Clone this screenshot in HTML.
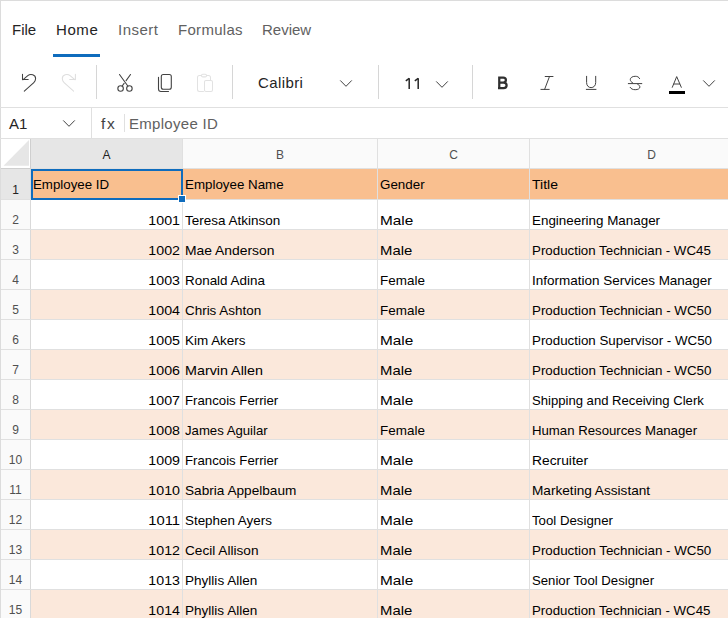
<!DOCTYPE html><html><head><meta charset="utf-8"><style>
*{margin:0;padding:0;box-sizing:border-box}
html,body{width:728px;height:618px;overflow:hidden;background:#fff}
body{position:relative;font-family:"Liberation Sans",sans-serif;}
.a{position:absolute}
.t{position:absolute;white-space:nowrap;line-height:16px;height:16px}
.tab{font-size:15px;color:#616161}
.cell{font-size:13.4px;color:#000}
.hl{position:absolute;background:#e0e0e0}
svg{position:absolute;overflow:visible}
</style></head><body>
<div class="a" style="left:0;top:0;width:728px;height:1px;background:#dcdcdc"></div>
<div class="a" style="left:0;top:0;width:1px;height:618px;background:#dcdcdc"></div>
<div class="t tab" style="left:12px;top:22px;color:#242424;letter-spacing:0px">File</div>
<div class="t tab" style="left:56px;top:22px;color:#242424;letter-spacing:0.6px">Home</div>
<div class="t tab" style="left:118px;top:22px;color:#616161;letter-spacing:0.5px">Insert</div>
<div class="t tab" style="left:178px;top:22px;color:#616161;letter-spacing:0.3px">Formulas</div>
<div class="t tab" style="left:262px;top:22px;color:#616161;letter-spacing:0px">Review</div>
<div class="a" style="left:53px;top:54px;width:47px;height:3px;background:#0f6cbd"></div>
<div class="a" style="left:96px;top:65px;width:1px;height:34px;background:#d6d6d6"></div>
<div class="a" style="left:232px;top:65px;width:1px;height:34px;background:#d6d6d6"></div>
<div class="a" style="left:378px;top:65px;width:1px;height:34px;background:#d6d6d6"></div>
<div class="a" style="left:472px;top:65px;width:1px;height:34px;background:#d6d6d6"></div>
<svg style="left:0;top:0" width="728" height="110" viewBox="0 0 728 110">
<g fill="none" stroke="#424242" stroke-width="1.05" stroke-linecap="round" stroke-linejoin="round">
 <path d="M22.5 74.3 V79.5 H28.2"/>
 <path d="M22.8 79.8 L27.8 75.6 C30.6 73.4 35.6 74.6 35.6 78.6 C35.6 80.3 34.9 81.6 33.8 82.6 L24.3 91.2"/>
</g>
<g fill="none" stroke="#dedede" stroke-width="1.05" stroke-linecap="round" stroke-linejoin="round">
 <path d="M75.4 74.3 V79.5 H69.7"/>
 <path d="M 75.1 79.8 L 70.1 75.6 C 67.3 73.4 62.3 74.6 62.3 78.6 C 62.3 80.3 63 81.6 64.1 82.6 L 73.6 91.2"/>
</g>
<g fill="none" stroke="#424242" stroke-width="1.1" stroke-linecap="round" stroke-linejoin="round">
 <path d="M119.5 74.5 L127.8 86"/>
 <path d="M130.5 74.5 L126.1 80.6"/><path d="M124.1 83.4 L122.2 86"/>
 <circle cx="120.6" cy="88.5" r="2.75"/>
 <circle cx="129.4" cy="88.5" r="2.75"/>
</g>
<g fill="none" stroke="#424242" stroke-width="1.1" stroke-linecap="round" stroke-linejoin="round">
 <rect x="161.3" y="74.5" width="10" height="14.8" rx="2"/>
 <path d="M158.5 77.3 V89 C158.5 90.4 159.6 91.5 161 91.5 H168.5"/>
</g>
<g fill="none" stroke="#e2e2e2" stroke-width="1.05" stroke-linecap="round" stroke-linejoin="round">
 <path d="M203.5 91.5 H199.5 C198.3 91.5 197.5 90.7 197.5 89.5 V77.5 C197.5 76.3 198.3 75.5 199.5 75.5 H201.5"/>
 <path d="M206.5 75.5 H208.5 C209.7 75.5 210.5 76.3 210.5 77.5 V79.5"/>
 <rect x="201.5" y="74.2" width="5" height="2.7" rx="1.2"/>
 <rect x="204.5" y="80.5" width="8" height="11" rx="1.5"/>
</g>
</svg>
<div class="t" style="left:258px;top:75px;font-size:15px;color:#242424;letter-spacing:0.4px">Calibri</div>
<svg style="left:340px;top:80px" width="12" height="7" viewBox="0 0 12 7"><path d="M0.5 0.7 L6.0 6.3 L11.5 0.7" fill="none" stroke="#424242" stroke-width="1" stroke-linecap="round" stroke-linejoin="round"/></svg>
<svg style="left:436px;top:80.5px" width="12" height="7" viewBox="0 0 12 7"><path d="M0.5 0.7 L6.0 6.3 L11.5 0.7" fill="none" stroke="#424242" stroke-width="1" stroke-linecap="round" stroke-linejoin="round"/></svg>
<svg style="left:703px;top:79.5px" width="12" height="7" viewBox="0 0 12 7"><path d="M0.5 0.7 L6.0 6.3 L11.5 0.7" fill="none" stroke="#424242" stroke-width="1" stroke-linecap="round" stroke-linejoin="round"/></svg>
<svg style="left:0;top:0" width="728" height="110" viewBox="0 0 728 110">
<g fill="none" stroke="#242424" stroke-width="1.5" stroke-linecap="butt" stroke-linejoin="round">
 <path d="M409.2 78.2 V89"/><path d="M409.2 78.4 L405.8 80.9"/>
 <path d="M418.2 78.2 V89"/><path d="M418.2 78.4 L414.8 80.9"/>
</g>
<g fill="none" stroke="#303030" stroke-width="2.25" stroke-linejoin="miter">
 <path d="M499.25 88.1 V77.55 H503.2 C505 77.55 505.9 78.6 505.9 80 C505.9 81.5 504.8 82.5 503.2 82.5 H499.25 M503.2 82.5 H503.6 C505.6 82.5 506.6 83.7 506.6 85.3 C506.6 87 505.5 88.1 503.6 88.1 H498"/>
</g>
<g fill="none" stroke="#424242" stroke-width="1" stroke-linecap="round">
 <path d="M545.2 76.5 H553"/><path d="M540.9 89.4 H549.2"/><path d="M549.5 76.5 L544.6 89.4"/>
 <path d="M586.6 76.3 V82.5 C586.6 85.8 588.6 87.6 591.1 87.6 C593.6 87.6 595.7 85.8 595.7 82.5 V76.3"/>
 <path d="M586.3 89.4 H596"/>
 <path d="M639.6 78.6 C638.9 76.9 637.3 76.3 635.2 76.3 C632.4 76.3 630.3 77.6 630.3 79.6 C630.3 81 631.2 82 632.6 82.8"/>
 <path d="M628.3 83.6 H641.8"/>
 <path d="M637.6 84.2 C639 84.9 639.9 85.8 639.9 87 C639.9 88.6 638 89.7 635.2 89.7 C632.8 89.7 631 88.9 630.2 87.4"/>
 <path d="M672.3 87.3 L676.7 76.6 L681.3 87.3"/><path d="M673.9 84 H679.7"/>
</g>
<rect x="669" y="91" width="16" height="3" fill="#000"/>
</svg>
<div class="hl" style="left:0;top:107px;width:728px;height:1px"></div>
<div class="hl" style="left:0;top:138px;width:728px;height:1px"></div>
<div class="hl" style="left:91px;top:108px;width:1px;height:30px"></div>
<div class="t" style="left:9px;top:116px;font-size:15px;color:#242424">A1</div>
<svg style="left:63px;top:120px" width="12" height="7" viewBox="0 0 12 7"><path d="M0.5 0.7 L6.0 6.3 L11.5 0.7" fill="none" stroke="#424242" stroke-width="1" stroke-linecap="round" stroke-linejoin="round"/></svg>
<div class="t" style="left:101px;top:116px;font-size:15.5px;color:#424242;letter-spacing:1.6px">fx</div>
<div class="a" style="left:124px;top:114px;width:1px;height:18px;background:#e0e0e0"></div>
<div class="t" style="left:129px;top:116px;font-size:15px;color:#616161;letter-spacing:0.3px">Employee ID</div>
<div class="a" style="left:1px;top:139px;width:29px;height:29px;background:#fff"></div>
<svg style="left:0;top:0" width="40" height="170"><path d="M3.5 165.7 L29 140 L29 165.7 Z" fill="#e6e6e6"/></svg>
<div class="a" style="left:31px;top:139px;width:151px;height:29px;background:#e6e6e6"></div>
<div class="t" style="left:31px;top:147px;width:151px;text-align:center;font-size:12px;color:#222">A</div>
<div class="a" style="left:183px;top:139px;width:194px;height:29px;background:#fafafa"></div>
<div class="t" style="left:183px;top:147px;width:194px;text-align:center;font-size:12px;color:#505050">B</div>
<div class="a" style="left:378px;top:139px;width:151px;height:29px;background:#fafafa"></div>
<div class="t" style="left:378px;top:147px;width:151px;text-align:center;font-size:12px;color:#505050">C</div>
<div class="a" style="left:530px;top:139px;width:243px;height:29px;background:#fafafa"></div>
<div class="t" style="left:530px;top:147px;width:243px;text-align:center;font-size:12px;color:#505050">D</div>
<div class="hl" style="left:1px;top:168px;width:727px;height:1px"></div>
<div class="hl" style="left:30px;top:139px;width:1px;height:479px;background:#d9d9d9"></div>
<div class="a" style="left:1px;top:169px;width:29px;height:30px;background:#e6e6e6"></div>
<div class="t" style="left:1px;top:182px;width:29px;text-align:center;font-size:12px;color:#222">1</div>
<div class="a" style="left:31px;top:169px;width:697px;height:30px;background:#f9bf8f"></div>
<div class="hl" style="left:1px;top:199px;width:727px;height:1px"></div>
<div class="a" style="left:1px;top:200px;width:29px;height:29px;background:#fafafa"></div>
<div class="t" style="left:1px;top:212px;width:29px;text-align:center;font-size:12px;color:#505050">2</div>
<div class="a" style="left:31px;top:200px;width:697px;height:29px;background:#fff"></div>
<div class="hl" style="left:1px;top:229px;width:727px;height:1px"></div>
<div class="a" style="left:1px;top:230px;width:29px;height:29px;background:#fafafa"></div>
<div class="t" style="left:1px;top:242px;width:29px;text-align:center;font-size:12px;color:#505050">3</div>
<div class="a" style="left:31px;top:230px;width:697px;height:29px;background:#fbe8db"></div>
<div class="hl" style="left:1px;top:259px;width:727px;height:1px"></div>
<div class="a" style="left:1px;top:260px;width:29px;height:29px;background:#fafafa"></div>
<div class="t" style="left:1px;top:272px;width:29px;text-align:center;font-size:12px;color:#505050">4</div>
<div class="a" style="left:31px;top:260px;width:697px;height:29px;background:#fff"></div>
<div class="hl" style="left:1px;top:289px;width:727px;height:1px"></div>
<div class="a" style="left:1px;top:290px;width:29px;height:29px;background:#fafafa"></div>
<div class="t" style="left:1px;top:302px;width:29px;text-align:center;font-size:12px;color:#505050">5</div>
<div class="a" style="left:31px;top:290px;width:697px;height:29px;background:#fbe8db"></div>
<div class="hl" style="left:1px;top:319px;width:727px;height:1px"></div>
<div class="a" style="left:1px;top:320px;width:29px;height:29px;background:#fafafa"></div>
<div class="t" style="left:1px;top:332px;width:29px;text-align:center;font-size:12px;color:#505050">6</div>
<div class="a" style="left:31px;top:320px;width:697px;height:29px;background:#fff"></div>
<div class="hl" style="left:1px;top:349px;width:727px;height:1px"></div>
<div class="a" style="left:1px;top:350px;width:29px;height:29px;background:#fafafa"></div>
<div class="t" style="left:1px;top:362px;width:29px;text-align:center;font-size:12px;color:#505050">7</div>
<div class="a" style="left:31px;top:350px;width:697px;height:29px;background:#fbe8db"></div>
<div class="hl" style="left:1px;top:379px;width:727px;height:1px"></div>
<div class="a" style="left:1px;top:380px;width:29px;height:29px;background:#fafafa"></div>
<div class="t" style="left:1px;top:392px;width:29px;text-align:center;font-size:12px;color:#505050">8</div>
<div class="a" style="left:31px;top:380px;width:697px;height:29px;background:#fff"></div>
<div class="hl" style="left:1px;top:409px;width:727px;height:1px"></div>
<div class="a" style="left:1px;top:410px;width:29px;height:29px;background:#fafafa"></div>
<div class="t" style="left:1px;top:422px;width:29px;text-align:center;font-size:12px;color:#505050">9</div>
<div class="a" style="left:31px;top:410px;width:697px;height:29px;background:#fbe8db"></div>
<div class="hl" style="left:1px;top:439px;width:727px;height:1px"></div>
<div class="a" style="left:1px;top:440px;width:29px;height:29px;background:#fafafa"></div>
<div class="t" style="left:1px;top:452px;width:29px;text-align:center;font-size:12px;color:#505050">10</div>
<div class="a" style="left:31px;top:440px;width:697px;height:29px;background:#fff"></div>
<div class="hl" style="left:1px;top:469px;width:727px;height:1px"></div>
<div class="a" style="left:1px;top:470px;width:29px;height:29px;background:#fafafa"></div>
<div class="t" style="left:1px;top:482px;width:29px;text-align:center;font-size:12px;color:#505050">11</div>
<div class="a" style="left:31px;top:470px;width:697px;height:29px;background:#fbe8db"></div>
<div class="hl" style="left:1px;top:499px;width:727px;height:1px"></div>
<div class="a" style="left:1px;top:500px;width:29px;height:29px;background:#fafafa"></div>
<div class="t" style="left:1px;top:512px;width:29px;text-align:center;font-size:12px;color:#505050">12</div>
<div class="a" style="left:31px;top:500px;width:697px;height:29px;background:#fff"></div>
<div class="hl" style="left:1px;top:529px;width:727px;height:1px"></div>
<div class="a" style="left:1px;top:530px;width:29px;height:29px;background:#fafafa"></div>
<div class="t" style="left:1px;top:542px;width:29px;text-align:center;font-size:12px;color:#505050">13</div>
<div class="a" style="left:31px;top:530px;width:697px;height:29px;background:#fbe8db"></div>
<div class="hl" style="left:1px;top:559px;width:727px;height:1px"></div>
<div class="a" style="left:1px;top:560px;width:29px;height:29px;background:#fafafa"></div>
<div class="t" style="left:1px;top:572px;width:29px;text-align:center;font-size:12px;color:#505050">14</div>
<div class="a" style="left:31px;top:560px;width:697px;height:29px;background:#fff"></div>
<div class="hl" style="left:1px;top:589px;width:727px;height:1px"></div>
<div class="a" style="left:1px;top:590px;width:29px;height:29px;background:#fafafa"></div>
<div class="t" style="left:1px;top:602px;width:29px;text-align:center;font-size:12px;color:#505050">15</div>
<div class="a" style="left:31px;top:590px;width:697px;height:29px;background:#fbe8db"></div>
<div class="hl" style="left:1px;top:619px;width:727px;height:1px"></div>
<div class="hl" style="left:182px;top:139px;width:1px;height:479px"></div>
<div class="hl" style="left:377px;top:139px;width:1px;height:479px"></div>
<div class="hl" style="left:529px;top:139px;width:1px;height:479px"></div>
<div class="a" style="left:30px;top:139px;width:1px;height:30px;background:#cfcfcf"></div>
<div class="a" style="left:1px;top:168px;width:30px;height:1px;background:#cfcfcf"></div>
<div class="t cell" style="left:33px;top:177px;transform:scaleX(0.9919);transform-origin:left">Employee ID</div>
<div class="t cell" style="left:185px;top:177px;transform:scaleX(0.9959);transform-origin:left">Employee Name</div>
<div class="t cell" style="left:380px;top:177px">Gender</div>
<div class="t cell" style="left:532px;top:177px;transform:scaleX(1.0452);transform-origin:left">Title</div>
<div class="t cell" style="left:100px;top:213px;width:80px;text-align:right;transform:scaleX(1.0623);transform-origin:right">1001</div>
<div class="t cell" style="left:185px;top:213px;transform:scaleX(1.0066);transform-origin:left">Teresa Atkinson</div>
<div class="t cell" style="left:380px;top:213px;transform:scaleX(1.1467);transform-origin:left">Male</div>
<div class="t cell" style="left:532px;top:213px">Engineering Manager</div>
<div class="t cell" style="left:100px;top:243px;width:80px;text-align:right;transform:scaleX(1.0623);transform-origin:right">1002</div>
<div class="t cell" style="left:185px;top:243px;transform:scaleX(1.0358);transform-origin:left">Mae Anderson</div>
<div class="t cell" style="left:380px;top:243px;transform:scaleX(1.1097);transform-origin:left">Male</div>
<div class="t cell" style="left:532px;top:243px;transform:scaleX(0.9944);transform-origin:left">Production Technician - WC45</div>
<div class="t cell" style="left:100px;top:273px;width:80px;text-align:right;transform:scaleX(1.0623);transform-origin:right">1003</div>
<div class="t cell" style="left:185px;top:273px;transform:scaleX(1.0027);transform-origin:left">Ronald Adina</div>
<div class="t cell" style="left:380px;top:273px;transform:scaleX(1.0050);transform-origin:left">Female</div>
<div class="t cell" style="left:532px;top:273px;transform:scaleX(1.0068);transform-origin:left">Information Services Manager</div>
<div class="t cell" style="left:100px;top:303px;width:80px;text-align:right;transform:scaleX(1.0623);transform-origin:right">1004</div>
<div class="t cell" style="left:185px;top:303px;transform:scaleX(1.0028);transform-origin:left">Chris Ashton</div>
<div class="t cell" style="left:380px;top:303px;transform:scaleX(1.0050);transform-origin:left">Female</div>
<div class="t cell" style="left:532px;top:303px;transform:scaleX(0.9978);transform-origin:left">Production Technician - WC50</div>
<div class="t cell" style="left:100px;top:333px;width:80px;text-align:right;transform:scaleX(1.0623);transform-origin:right">1005</div>
<div class="t cell" style="left:185px;top:333px;transform:scaleX(1.0037);transform-origin:left">Kim Akers</div>
<div class="t cell" style="left:380px;top:333px;transform:scaleX(1.1467);transform-origin:left">Male</div>
<div class="t cell" style="left:532px;top:333px;transform:scaleX(0.9955);transform-origin:left">Production Supervisor - WC50</div>
<div class="t cell" style="left:100px;top:363px;width:80px;text-align:right;transform:scaleX(1.0623);transform-origin:right">1006</div>
<div class="t cell" style="left:185px;top:363px;transform:scaleX(1.0686);transform-origin:left">Marvin Allen</div>
<div class="t cell" style="left:380px;top:363px;transform:scaleX(1.1097);transform-origin:left">Male</div>
<div class="t cell" style="left:532px;top:363px;transform:scaleX(0.9978);transform-origin:left">Production Technician - WC50</div>
<div class="t cell" style="left:100px;top:393px;width:80px;text-align:right;transform:scaleX(1.0623);transform-origin:right">1007</div>
<div class="t cell" style="left:185px;top:393px;transform:scaleX(0.9870);transform-origin:left">Francois Ferrier</div>
<div class="t cell" style="left:380px;top:393px;transform:scaleX(1.1467);transform-origin:left">Male</div>
<div class="t cell" style="left:532px;top:393px;transform:scaleX(0.9780);transform-origin:left">Shipping and Receiving Clerk</div>
<div class="t cell" style="left:100px;top:423px;width:80px;text-align:right;transform:scaleX(1.0623);transform-origin:right">1008</div>
<div class="t cell" style="left:185px;top:423px;transform:scaleX(0.9830);transform-origin:left">James Aguilar</div>
<div class="t cell" style="left:380px;top:423px;transform:scaleX(1.0050);transform-origin:left">Female</div>
<div class="t cell" style="left:532px;top:423px;transform:scaleX(0.9855);transform-origin:left">Human Resources Manager</div>
<div class="t cell" style="left:100px;top:453px;width:80px;text-align:right;transform:scaleX(1.0623);transform-origin:right">1009</div>
<div class="t cell" style="left:185px;top:453px;transform:scaleX(0.9870);transform-origin:left">Francois Ferrier</div>
<div class="t cell" style="left:380px;top:453px;transform:scaleX(1.1467);transform-origin:left">Male</div>
<div class="t cell" style="left:532px;top:453px;transform:scaleX(1.0310);transform-origin:left">Recruiter</div>
<div class="t cell" style="left:100px;top:483px;width:80px;text-align:right;transform:scaleX(1.0623);transform-origin:right">1010</div>
<div class="t cell" style="left:185px;top:483px;transform:scaleX(1.0170);transform-origin:left">Sabria Appelbaum</div>
<div class="t cell" style="left:380px;top:483px;transform:scaleX(1.1097);transform-origin:left">Male</div>
<div class="t cell" style="left:532px;top:483px;transform:scaleX(1.0175);transform-origin:left">Marketing Assistant</div>
<div class="t cell" style="left:100px;top:513px;width:80px;text-align:right;transform:scaleX(1.1048);transform-origin:right">1011</div>
<div class="t cell" style="left:185px;top:513px">Stephen Ayers</div>
<div class="t cell" style="left:380px;top:513px;transform:scaleX(1.1467);transform-origin:left">Male</div>
<div class="t cell" style="left:532px;top:513px;transform:scaleX(0.9881);transform-origin:left">Tool Designer</div>
<div class="t cell" style="left:100px;top:543px;width:80px;text-align:right;transform:scaleX(1.0623);transform-origin:right">1012</div>
<div class="t cell" style="left:185px;top:543px;transform:scaleX(1.0175);transform-origin:left">Cecil Allison</div>
<div class="t cell" style="left:380px;top:543px;transform:scaleX(1.1097);transform-origin:left">Male</div>
<div class="t cell" style="left:532px;top:543px;transform:scaleX(0.9966);transform-origin:left">Production Technician - WC50</div>
<div class="t cell" style="left:100px;top:573px;width:80px;text-align:right;transform:scaleX(1.0623);transform-origin:right">1013</div>
<div class="t cell" style="left:185px;top:573px;transform:scaleX(1.0119);transform-origin:left">Phyllis Allen</div>
<div class="t cell" style="left:380px;top:573px;transform:scaleX(1.1467);transform-origin:left">Male</div>
<div class="t cell" style="left:532px;top:573px;transform:scaleX(0.9836);transform-origin:left">Senior Tool Designer</div>
<div class="t cell" style="left:100px;top:603px;width:80px;text-align:right;transform:scaleX(1.0623);transform-origin:right">1014</div>
<div class="t cell" style="left:185px;top:603px;transform:scaleX(1.0117);transform-origin:left">Phyllis Allen</div>
<div class="t cell" style="left:380px;top:603px;transform:scaleX(1.1097);transform-origin:left">Male</div>
<div class="t cell" style="left:532px;top:603px;transform:scaleX(0.9921);transform-origin:left">Production Technician - WC45</div>
<div class="a" style="left:31px;top:169px;width:152px;height:31px;border:2px solid #0f6cbd"></div>
<div class="a" style="left:178px;top:195px;width:8px;height:8px;background:#0f6cbd;border:1px solid #fff"></div>
</body></html>
